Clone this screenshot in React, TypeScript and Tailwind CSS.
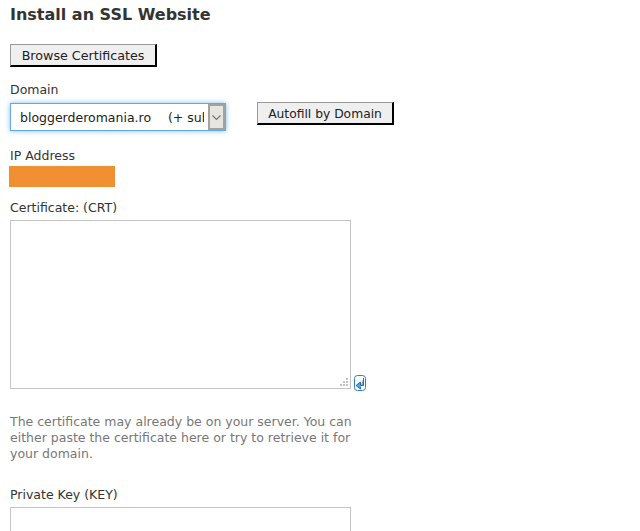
/**
 * SSL install form: heading, browse button, domain row, IP, certificate and key fields.
 */
const FONT = "font-['DejaVu_Sans',Verdana,sans-serif]";

function FormButton({ label, className }: { label: string; className: string }) {
  return (
    <button
      className={`block h-[23px] ${className} border border-[#999] border-r-2 border-b-2 border-r-black border-b-black bg-[#efefef] pt-[1px] leading-[20px] text-[#222]`}
    >
      {label}
    </button>
  );
}

function Label({ children }: { children: string }) {
  return <div className="h-[16px] text-[12.5px] leading-[16px] text-[#333]">{children}</div>;
}

function PasteIcon() {
  return (
    <svg width="12" height="16" viewBox="0 0 12 16" className="block">
      <rect x="0.5" y="0.5" width="11" height="15" rx="3" fill="#fff" stroke="#2f7fc1" />
      <path d="M9.5 3v7.5H6.5V7L2 10.5 6.5 14v-2" fill="#5ba3dc" stroke="#1f6fb0" strokeWidth="1" />
    </svg>
  );
}

export default function App() {
  return (
    <div className={`${FONT} h-[531px] w-[640px] overflow-hidden bg-white pl-[10px]`}>
      <h1 className="pt-[5px] text-[16px] font-bold leading-[20px] text-[#333]">Install an SSL Website</h1>

      <div className="mt-[19px]">
        <FormButton label="Browse Certificates" className="w-[147px] text-[12.7px]" />
      </div>

      <div className="mt-[15px]">
        <Label>Domain</Label>
      </div>
      <div className="mt-[5px] flex items-start">
        <div className="flex h-[28px] w-[216px] border border-[#64a8e8] shadow-[0_0_5px_#7db9ee]">
          <div className="mr-[4px] min-w-0 flex-1 overflow-hidden whitespace-pre pl-[9px] text-[12.5px] leading-[27px] text-[#222]">
            bloggerderomania.ro{"    "}
            <span className="ml-[1px]">(+ subdomains)</span>
          </div>
          <div className="flex w-[17px] items-center justify-center border-2 border-[#a3a39d] bg-[#e6e6de]">
            <svg width="11" height="7" viewBox="0 0 11 7">
              <path d="M1.5 1.5l4 4 4-4" fill="none" stroke="#777" strokeWidth="1.2" />
            </svg>
          </div>
        </div>
        <div className="ml-[31px] -mt-[1px]">
          <FormButton label="Autofill by Domain" className="w-[137px] text-[12.3px]" />
        </div>
      </div>

      <div className="mt-[17px]">
        <Label>IP Address</Label>
      </div>
      <div className="-ml-[1px] mt-[2px] h-[21px] w-[106px] bg-[#f09033]" />

      <div className="mt-[13px]">
        <Label>Certificate: (CRT)</Label>
      </div>
      <div className="mt-[4px] flex items-end">
        <div className="relative h-[169px] w-[341px] border border-[#c4c4c4]">
          <svg width="10" height="10" viewBox="0 0 10 10" className="absolute bottom-[1px] right-[1px]">
            <path d="M7 1h2v2H7zM4 4h2v2H4zM7 4h2v2H7zM1 7h2v2H1zM4 7h2v2H4zM7 7h2v2H7z" fill="#c4c4c4" />
          </svg>
        </div>
        <div className="ml-[3px] -mb-[2px]">
          <PasteIcon />
        </div>
      </div>

      <p className="mt-[25px] w-[345px] text-[12.5px] leading-[16px] text-[#777]">
        The certificate may already be on your server. You can either paste the certificate here or try to retrieve it for your domain.
      </p>

      <div className="mt-[25px]">
        <Label>Private Key (KEY)</Label>
      </div>
      <div className="mt-[4px] h-[169px] w-[341px] border border-[#c4c4c4]" />
    </div>
  );
}
